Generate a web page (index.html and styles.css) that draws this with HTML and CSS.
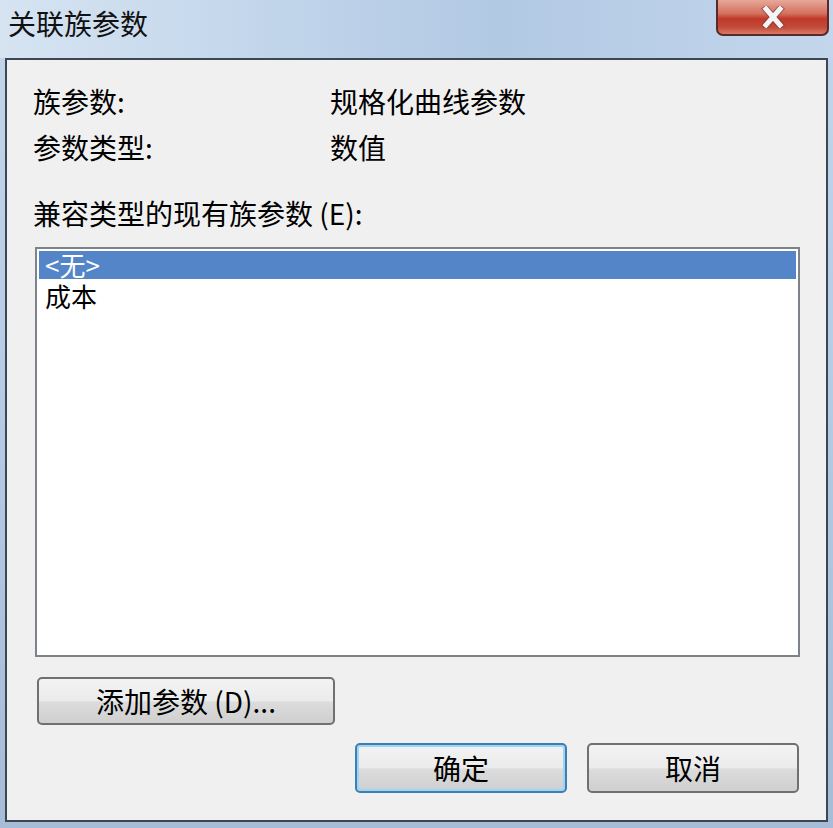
FILE: index.html
```html
<!DOCTYPE html>
<html lang="zh-CN">
<head>
  <meta charset="UTF-8" />
  <title>关联族参数</title>
  <link rel="stylesheet" href="styles.css">
</head>
<body>
  <div class="window">
    <!-- Title bar -->
    <div class="titlebar">
      <div class="title">关联族参数</div>
      <div class="close-btn">
        <svg width="34" height="22" viewBox="0 0 34 22">
          <path d="M10 3 L24 19 M24 3 L10 19" stroke="#6a3a3a" stroke-width="7" stroke-linecap="square" opacity="0.6"/>
          <path d="M10 3 L24 19 M24 3 L10 19" stroke="#f4f4f4" stroke-width="5" stroke-linecap="square"/>
        </svg>
      </div>
    </div>

    <!-- Client area -->
    <div class="client">
      <div class="info">
        <div class="label">族参数:</div>
        <div class="value">规格化曲线参数</div>
        <div class="label">参数类型:</div>
        <div class="value">数值</div>
      </div>

      <div class="list-label">兼容类型的现有族参数 (<u>E</u>):</div>

      <div class="listbox">
        <div class="item selected">&lt;无&gt;</div>
        <div class="item">成本</div>
      </div>

      <div class="add-row">
        <button class="btn add-btn">添加参数 (<u>D</u>)...</button>
      </div>

      <div class="footer">
        <button class="btn default">确定</button>
        <button class="btn">取消</button>
      </div>
    </div>
  </div>
</body>
</html>
```

FILE: styles.css
```css
/* Base */
body {
  margin: 0;
  padding: 0;
  background: #a9bdd6;
  font-family: "Noto Sans CJK SC", "Noto Sans", sans-serif;
  color: #000;
}

/* Window frame */
.window {
  width: 833px;
  height: 828px;
  display: flex;
  flex-direction: column;
  background: linear-gradient(180deg, #c3d6ea 0%, #b8cde6 40%, #a6bcd7 100%);
  box-sizing: border-box;
}

/* Title bar */
.titlebar {
  height: 58px;
  display: flex;
  align-items: flex-start;
  justify-content: space-between;
  background: linear-gradient(90deg, #d6e4f2 0%, #c0d4ea 35%, #b2c9e4 60%, #c3d6ec 100%);
}
.title {
  font-size: 28px;
  line-height: 34px;
  padding: 6px 0 0 8px;
  color: #111;
}
.close-btn {
  width: 113px;
  height: 36px;
  margin-right: 4px;
  box-sizing: border-box;
  border: 2px solid #5a2a2a;
  border-top: none;
  border-radius: 0 0 7px 7px;
  background: linear-gradient(180deg, #e6a89a 0%, #d4705c 40%, #c0392b 55%, #c24a38 80%, #d87a66 100%);
  display: flex;
  align-items: center;
  justify-content: center;
}

/* Client area */
.client {
  flex: 1;
  margin: 0 5px 6px 5px;
  border: 2px solid #3c4756;
  background: #f0f0f0;
  padding: 24px 26px 0 26px;
  display: flex;
  flex-direction: column;
}

.info {
  display: grid;
  grid-template-columns: 297px 1fr;
  row-gap: 12px;
  font-size: 28px;
  line-height: 34px;
}

.list-label {
  font-size: 28px;
  line-height: 34px;
  margin-top: 32px;
}
u {
  text-decoration: none;
}

/* List box */
.listbox {
  margin: 17px 0 0 2px;
  width: 765px;
  height: 410px;
  box-sizing: border-box;
  border: 2px solid #7d828b;
  background: #fff;
  padding: 2px;
}
.item {
  font-size: 26px;
  line-height: 30px;
  height: 30px;
  padding-left: 6px;
}
.item.selected {
  background: #5385c8;
  color: #fff;
  line-height: 28px;
  height: 28px;
  margin-bottom: 2px;
}

/* Buttons */
.btn {
  font-family: "Noto Sans CJK SC", "Noto Sans", sans-serif;
  font-size: 28px;
  line-height: 34px;
  color: #000;
  height: 50px;
  box-sizing: border-box;
  border: 2px solid #707070;
  border-radius: 5px;
  background: linear-gradient(180deg, #f3f3f3 0%, #ebebeb 50%, #dcdcdc 52%, #cfcfcf 100%);
  padding: 0;
}
.add-row {
  margin-top: 20px;
  padding-left: 4px;
}
.add-btn {
  width: 298px;
  height: 48px;
}
.footer {
  margin-top: 18px;
  display: flex;
  justify-content: flex-end;
  gap: 20px;
  padding-right: 1px;
}
.footer .btn {
  width: 212px;
}
.btn.default {
  border-color: #3c7fb1;
  box-shadow: inset 0 0 0 2px #9fd4f4;
}
```
